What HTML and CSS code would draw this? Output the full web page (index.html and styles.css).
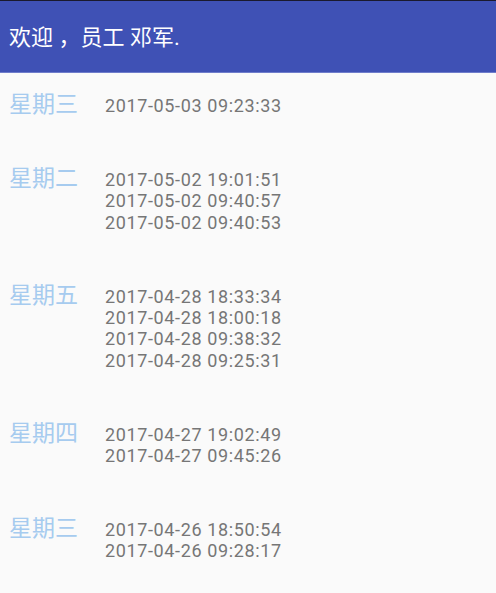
FILE: index.html
```html
<!DOCTYPE html>
<html lang="zh">
<head>
<meta charset="utf-8">
<link rel="stylesheet" href="styles.css">
</head>
<body>
<header class="appbar">
  <h1 class="title">欢迎 ，员工 邓军.</h1>
</header>
<main class="list">
  <section class="row">
    <div class="day">星期三</div>
    <div class="times">
      <div>2017-05-03 09:23:33</div>
    </div>
  </section>
  <section class="row">
    <div class="day">星期二</div>
    <div class="times">
      <div>2017-05-02 19:01:51</div>
      <div>2017-05-02 09:40:57</div>
      <div>2017-05-02 09:40:53</div>
    </div>
  </section>
  <section class="row">
    <div class="day">星期五</div>
    <div class="times">
      <div>2017-04-28 18:33:34</div>
      <div>2017-04-28 18:00:18</div>
      <div>2017-04-28 09:38:32</div>
      <div>2017-04-28 09:25:31</div>
    </div>
  </section>
  <section class="row">
    <div class="day">星期四</div>
    <div class="times">
      <div>2017-04-27 19:02:49</div>
      <div>2017-04-27 09:45:26</div>
    </div>
  </section>
  <section class="row">
    <div class="day">星期三</div>
    <div class="times">
      <div>2017-04-26 18:50:54</div>
      <div>2017-04-26 09:28:17</div>
    </div>
  </section>
</main>
</body>
</html>
```
FILE: styles.css
```css
html, body {
  margin: 0;
  padding: 0;
}
body {
  background: #fafafa;
  font-family: Roboto, "Noto Sans CJK SC", sans-serif;
  width: 496px;
  height: 593px;
  overflow: hidden;
}
.appbar {
  height: 71px;
  background: #3f51b5;
  border-top: 1px solid #1a1a2e;
  border-bottom: 1px solid #6f7dcb;
  display: flex;
  align-items: center;
  padding-left: 9px;
}
.title {
  margin: 0;
  color: #ffffff;
  font-weight: normal;
  font-size: 22px;
  line-height: 26px;
  margin-top: 3px;
}
.list {
  display: flex;
  flex-direction: column;
}
.row {
  display: flex;
  align-items: baseline;
  padding: 21px 0 30.75px 9px;
}
.day {
  width: 96px;
  flex: none;
  color: #a6cbef;
  font-size: 23px;
  line-height: 21px;
}
.times {
  color: #767676;
  font-size: 18px;
  line-height: 21.3px;
  letter-spacing: 0.63px;
}
```
